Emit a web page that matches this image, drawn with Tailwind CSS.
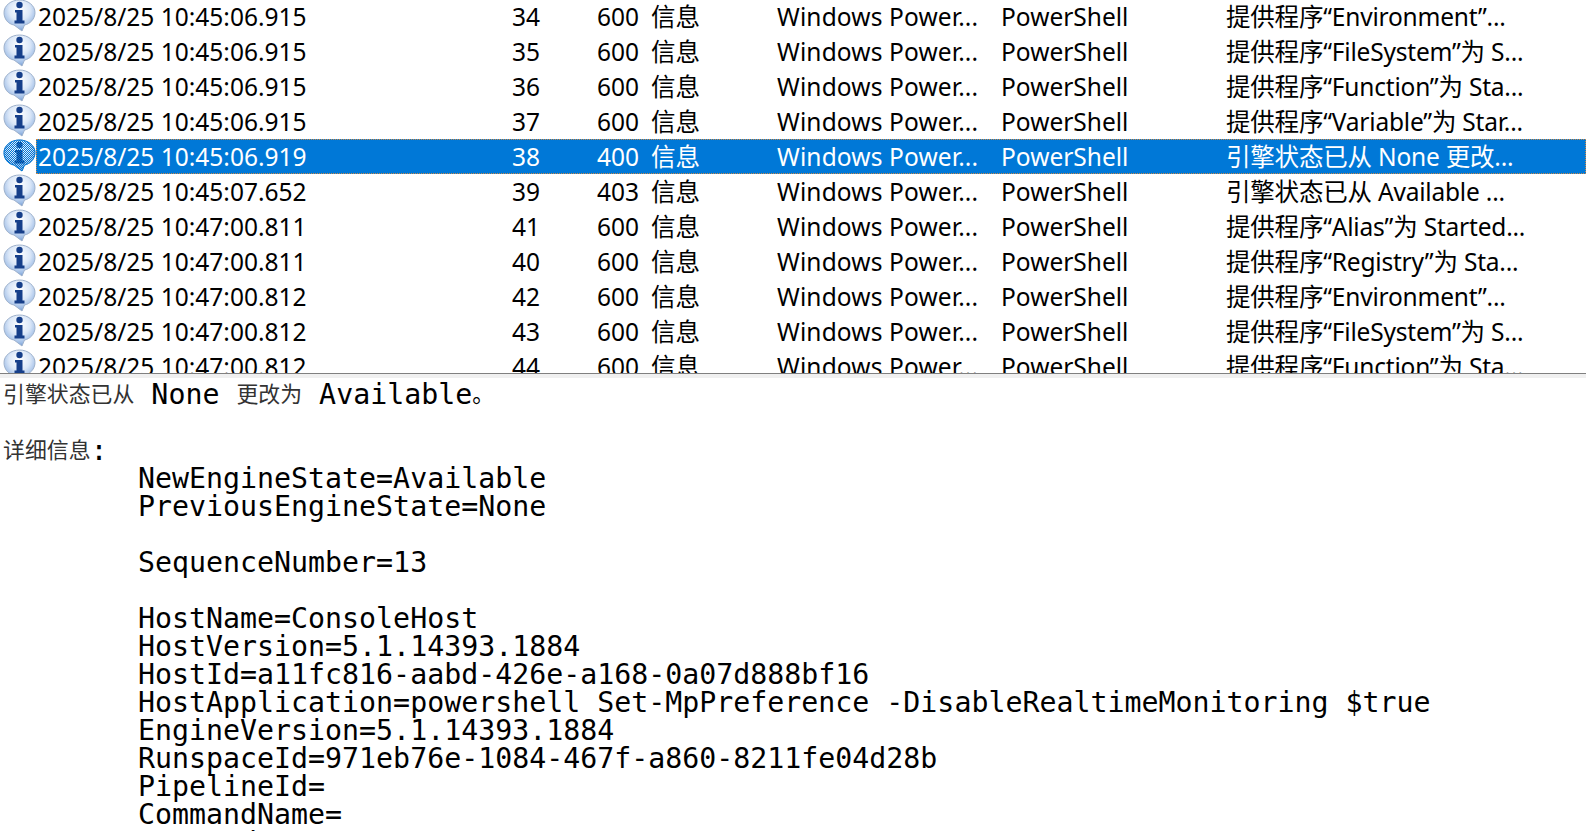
<!DOCTYPE html>
<html lang="zh-CN">
<head>
  <meta charset="UTF-8">
  <title>Event Viewer</title>
  <script src="https://cdn.jsdelivr.net/npm/@tailwindcss/browser@4"></script>
</head>
<body class="bg-white text-black overflow-hidden font-['Noto_Sans','Noto_Sans_CJK_SC',sans-serif]">
  <svg class="absolute w-0 h-0">
    <defs>
      <radialGradient id="bubble" cx="50%" cy="32%" r="68%">
        <stop offset="0" stop-color="#ffffff"/>
        <stop offset="0.5" stop-color="#dce8f8"/>
        <stop offset="0.85" stop-color="#9dbce6"/>
        <stop offset="1" stop-color="#6f98d0"/>
      </radialGradient>
      <pattern id="checker" width="2" height="2" patternUnits="userSpaceOnUse">
        <rect width="1" height="1" fill="#0078d7"/>
        <rect x="1" y="1" width="1" height="1" fill="#0078d7"/>
      </pattern>
      <symbol id="info" viewBox="0 0 36 35">
        <path d="M19.5 1C28 1 35 6.5 35 13.5C35 20 30 25 24.5 26L22 32L14 26C8 25 4 20 4 13.5C4 6.5 11 1 19.5 1Z" fill="url(#bubble)" stroke="#9fb2cc" stroke-width="1"/>
        <circle cx="19.5" cy="6" r="3.2" fill="#163f8a"/>
        <path d="M15 11H22.5V21.5H24.5V24.5H14.5V21.5H16.5V13.5H15Z" fill="#163f8a"/>
      </symbol>
      <symbol id="info-selected" viewBox="0 0 36 35">
        <use href="#info" width="36" height="35"/>
        <path d="M19.5 1C28 1 35 6.5 35 13.5C35 20 30 25 24.5 26L22 32L14 26C8 25 4 20 4 13.5C4 6.5 11 1 19.5 1Z" fill="url(#checker)" stroke="#0078d7" stroke-width="1"/>
      </symbol>
    </defs>
  </svg>

  <main class="h-[831px] flex flex-col">
    <section class="h-[373px] shrink-0 overflow-hidden text-[24.5px] leading-[36px]">
      <div class="-mt-px"></div>
      <div class="flex h-[35px]"><svg class="w-9 h-[35px] shrink-0"><use href="#info"/></svg><div class="flex-1 grid grid-cols-[469px_35px_57px_54px_126px_224px_225px_1fr] whitespace-nowrap"><span class="pl-0.5">2025/8/25 10:45:06.915</span><span class="text-right">34</span><span></span><span>600</span><span>信息</span><span class="tracking-[0.13px]">Windows Power...</span><span>PowerShell</span><span class="tracking-[-0.2px]">提供程序“Environment”...</span></div></div>
      <div class="flex h-[35px]"><svg class="w-9 h-[35px] shrink-0"><use href="#info"/></svg><div class="flex-1 grid grid-cols-[469px_35px_57px_54px_126px_224px_225px_1fr] whitespace-nowrap"><span class="pl-0.5">2025/8/25 10:45:06.915</span><span class="text-right">35</span><span></span><span>600</span><span>信息</span><span class="tracking-[0.13px]">Windows Power...</span><span>PowerShell</span><span class="tracking-[-0.2px]">提供程序“FileSystem”为 S...</span></div></div>
      <div class="flex h-[35px]"><svg class="w-9 h-[35px] shrink-0"><use href="#info"/></svg><div class="flex-1 grid grid-cols-[469px_35px_57px_54px_126px_224px_225px_1fr] whitespace-nowrap"><span class="pl-0.5">2025/8/25 10:45:06.915</span><span class="text-right">36</span><span></span><span>600</span><span>信息</span><span class="tracking-[0.13px]">Windows Power...</span><span>PowerShell</span><span class="tracking-[-0.2px]">提供程序“Function”为 Sta...</span></div></div>
      <div class="flex h-[35px]"><svg class="w-9 h-[35px] shrink-0"><use href="#info"/></svg><div class="flex-1 grid grid-cols-[469px_35px_57px_54px_126px_224px_225px_1fr] whitespace-nowrap"><span class="pl-0.5">2025/8/25 10:45:06.915</span><span class="text-right">37</span><span></span><span>600</span><span>信息</span><span class="tracking-[0.13px]">Windows Power...</span><span>PowerShell</span><span class="tracking-[-0.2px]">提供程序“Variable”为 Star...</span></div></div>
      <div class="flex h-[35px]"><svg class="w-9 h-[35px] shrink-0"><use href="#info-selected"/></svg><div class="flex-1 grid grid-cols-[469px_35px_57px_54px_126px_224px_225px_1fr] whitespace-nowrap bg-[#0078d7] text-white outline-1 -outline-offset-1 outline-dotted outline-[#c98a4a]"><span class="pl-0.5">2025/8/25 10:45:06.919</span><span class="text-right">38</span><span></span><span>400</span><span>信息</span><span class="tracking-[0.13px]">Windows Power...</span><span>PowerShell</span><span class="tracking-[-0.2px]">引擎状态已从 None 更改...</span></div></div>
      <div class="flex h-[35px]"><svg class="w-9 h-[35px] shrink-0"><use href="#info"/></svg><div class="flex-1 grid grid-cols-[469px_35px_57px_54px_126px_224px_225px_1fr] whitespace-nowrap"><span class="pl-0.5">2025/8/25 10:45:07.652</span><span class="text-right">39</span><span></span><span>403</span><span>信息</span><span class="tracking-[0.13px]">Windows Power...</span><span>PowerShell</span><span class="tracking-[-0.2px]">引擎状态已从 Available ...</span></div></div>
      <div class="flex h-[35px]"><svg class="w-9 h-[35px] shrink-0"><use href="#info"/></svg><div class="flex-1 grid grid-cols-[469px_35px_57px_54px_126px_224px_225px_1fr] whitespace-nowrap"><span class="pl-0.5">2025/8/25 10:47:00.811</span><span class="text-right">41</span><span></span><span>600</span><span>信息</span><span class="tracking-[0.13px]">Windows Power...</span><span>PowerShell</span><span class="tracking-[-0.2px]">提供程序“Alias”为 Started...</span></div></div>
      <div class="flex h-[35px]"><svg class="w-9 h-[35px] shrink-0"><use href="#info"/></svg><div class="flex-1 grid grid-cols-[469px_35px_57px_54px_126px_224px_225px_1fr] whitespace-nowrap"><span class="pl-0.5">2025/8/25 10:47:00.811</span><span class="text-right">40</span><span></span><span>600</span><span>信息</span><span class="tracking-[0.13px]">Windows Power...</span><span>PowerShell</span><span class="tracking-[-0.2px]">提供程序“Registry”为 Sta...</span></div></div>
      <div class="flex h-[35px]"><svg class="w-9 h-[35px] shrink-0"><use href="#info"/></svg><div class="flex-1 grid grid-cols-[469px_35px_57px_54px_126px_224px_225px_1fr] whitespace-nowrap"><span class="pl-0.5">2025/8/25 10:47:00.812</span><span class="text-right">42</span><span></span><span>600</span><span>信息</span><span class="tracking-[0.13px]">Windows Power...</span><span>PowerShell</span><span class="tracking-[-0.2px]">提供程序“Environment”...</span></div></div>
      <div class="flex h-[35px]"><svg class="w-9 h-[35px] shrink-0"><use href="#info"/></svg><div class="flex-1 grid grid-cols-[469px_35px_57px_54px_126px_224px_225px_1fr] whitespace-nowrap"><span class="pl-0.5">2025/8/25 10:47:00.812</span><span class="text-right">43</span><span></span><span>600</span><span>信息</span><span class="tracking-[0.13px]">Windows Power...</span><span>PowerShell</span><span class="tracking-[-0.2px]">提供程序“FileSystem”为 S...</span></div></div>
      <div class="flex h-[35px]"><svg class="w-9 h-[35px] shrink-0"><use href="#info"/></svg><div class="flex-1 grid grid-cols-[469px_35px_57px_54px_126px_224px_225px_1fr] whitespace-nowrap"><span class="pl-0.5">2025/8/25 10:47:00.812</span><span class="text-right">44</span><span></span><span>600</span><span>信息</span><span class="tracking-[0.13px]">Windows Power...</span><span>PowerShell</span><span class="tracking-[-0.2px]">提供程序“Function”为 Sta...</span></div></div>
    </section>

    <div class="h-[5px] shrink-0 border-t border-[#808080] bg-[#f0f0f0]"></div>

    <section class="flex-1 min-h-0 overflow-hidden pt-[3px] pl-[3px] font-['DejaVu_Sans_Mono','Noto_Sans_CJK_SC',monospace] text-[28.25px] leading-[28px]">
      <div><span class="relative -top-0.5 text-[21.9px] text-[#333] font-['Noto_Sans_CJK_SC',sans-serif]">引擎状态已从</span> None <span class="relative -top-0.5 text-[21.9px] text-[#333] font-['Noto_Sans_CJK_SC',sans-serif]">更改为</span> Available<span class="relative -top-0.5 text-[21.9px] font-['Noto_Sans_CJK_SC',sans-serif]">。</span></div>
      <div class="h-7"></div>
      <div><span class="relative -top-0.5 text-[21.9px] text-[#333] font-['Noto_Sans_CJK_SC',sans-serif]">详细信息</span>:</div>
      <div class="pl-[135px] whitespace-nowrap">
        <div>NewEngineState=Available</div>
        <div>PreviousEngineState=None</div>
        <div class="h-7"></div>
        <div>SequenceNumber=13</div>
        <div class="h-7"></div>
        <div>HostName=ConsoleHost</div>
        <div>HostVersion=5.1.14393.1884</div>
        <div>HostId=a11fc816-aabd-426e-a168-0a07d888bf16</div>
        <div>HostApplication=powershell Set-MpPreference -DisableRealtimeMonitoring $true</div>
        <div>EngineVersion=5.1.14393.1884</div>
        <div>RunspaceId=971eb76e-1084-467f-a860-8211fe04d28b</div>
        <div>PipelineId=</div>
        <div>CommandName=</div>
        <div>CommandType=</div>
      </div>
    </section>
  </main>
</body>
</html>
